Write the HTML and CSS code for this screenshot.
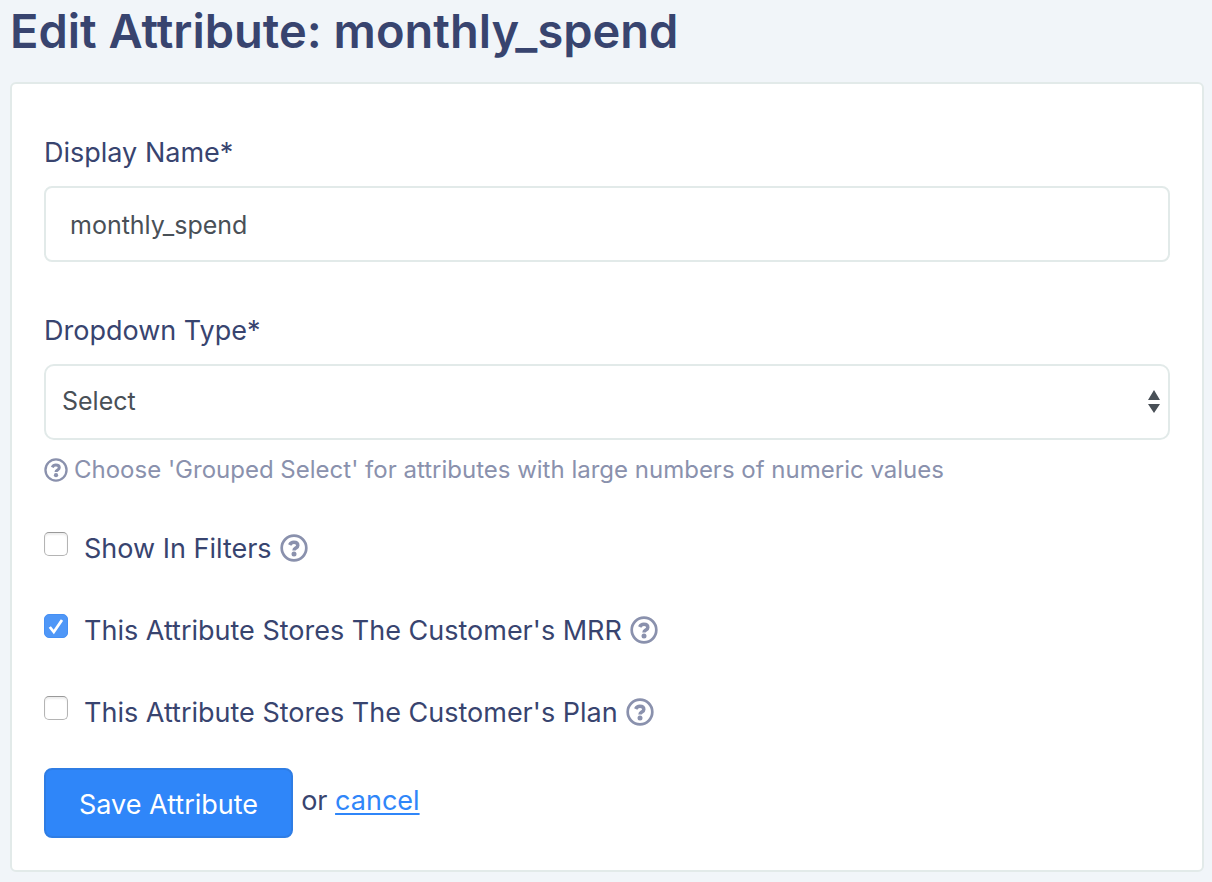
FILE: index.html
```html
<!DOCTYPE html>
<html lang="en">
<head>
<meta charset="utf-8">
<meta name="viewport" content="width=device-width, initial-scale=1">
<title>Edit Attribute: monthly_spend</title>
<link rel="stylesheet" href="styles.css">
</head>
<body>
<svg class="sprite" aria-hidden="true">
  <symbol id="help" viewBox="0 0 28 28">
    <circle cx="14" cy="14" r="12.3" fill="none" stroke="currentColor" stroke-width="2.7"/>
    <path d="M9.7 11C10.5 9.2 11.8 8.3 13.8 8.3c2.4 0 4 1.2 4 3.1 0 2.6-3.8 2.6-3.8 5" fill="none" stroke="currentColor" stroke-width="3.5"/>
    <circle cx="14" cy="20" r="2.5" fill="currentColor"/>
  </symbol>
</svg>
<main class="page">
  <h1 class="title">Edit Attribute: monthly_spend</h1>
  <form class="card">
    <div class="field">
      <label class="label" for="display-name">Display Name*</label>
      <input class="control" id="display-name" type="text" value="monthly_spend">
    </div>
    <div class="field">
      <label class="label" for="dropdown-type">Dropdown Type*</label>
      <div class="select">
        <select class="control control-select" id="dropdown-type">
          <option>Select</option>
          <option>Grouped Select</option>
        </select>
        <svg class="arrows" viewBox="0 0 12 24" aria-hidden="true"><path d="M6 0l6 10H0zM0 14h12L6 23z" fill="currentColor"/></svg>
      </div>
      <p class="hint"><svg class="hint-icon" aria-hidden="true"><use href="#help"/></svg>Choose 'Grouped Select' for attributes with large numbers of numeric values</p>
    </div>
    <div class="checks">
      <div class="check">
        <input class="box" type="checkbox" id="filters">
        <label for="filters">Show In Filters</label>
        <svg class="help-icon" aria-hidden="true"><use href="#help"/></svg>
      </div>
      <div class="check">
        <input class="box" type="checkbox" id="mrr" checked>
        <label for="mrr">This Attribute Stores The Customer's MRR</label>
        <svg class="help-icon" aria-hidden="true"><use href="#help"/></svg>
      </div>
      <div class="check">
        <input class="box" type="checkbox" id="plan">
        <label for="plan">This Attribute Stores The Customer's Plan</label>
        <svg class="help-icon" aria-hidden="true"><use href="#help"/></svg>
      </div>
    </div>
    <div class="actions">
      <button class="save" type="submit">Save Attribute</button>
      <span class="alt">or <a class="cancel" href="#">cancel</a></span>
    </div>
  </form>
</main>
</body>
</html>
```

FILE: styles.css
```css
* {
  box-sizing: border-box;
}

body {
  margin: 0;
  background: #f1f5f9;
  color: #38446f;
  font-family: Inter, "Liberation Sans", sans-serif;
  font-size: 27px;
  line-height: 34px;
}

.sprite {
  position: absolute;
  width: 0;
  height: 0;
}

.page {
  padding: 0 8px 10px 10px;
}

.title {
  margin: 0 0 20px;
  font-size: 47px;
  line-height: 62px;
  font-weight: 600;
}

.card {
  padding: 52px 32px 32px;
  border: 2px solid #e2eae9;
  border-radius: 6px;
  background: #fff;
}

.field {
  margin-bottom: 52px;
}

.label {
  display: block;
  margin-bottom: 16px;
}

.control {
  display: block;
  width: 100%;
  height: 76px;
  padding: 2px 24px 0;
  border: 2px solid #e2eae9;
  border-radius: 8px;
  background: #fff;
  color: #495057;
  font: inherit;
  font-size: 25px;
}

.control-select {
  padding: 0 40px 2px 16px;
  border-radius: 10px;
  appearance: none;
}

.select {
  position: relative;
}

.arrows {
  position: absolute;
  top: 26px;
  right: 10px;
  width: 12px;
  height: 24px;
  color: #495057;
  pointer-events: none;
}

.hint {
  display: flex;
  align-items: center;
  gap: 6px;
  margin: 14px 0 0;
  color: #8a91ad;
  font-size: 24px;
  line-height: 32px;
}

.hint-icon {
  flex: none;
  width: 24px;
  height: 24px;
}

.checks {
  display: flex;
  flex-direction: column;
  gap: 48px;
  margin: -6px 0 40px;
}

.check {
  display: flex;
  align-items: center;
}

.box {
  align-self: flex-start;
  flex: none;
  width: 24px;
  height: 24px;
  margin: 0 16px 0 0;
  border: 1px solid #b4b4b4;
  border-top-color: #999;
  border-radius: 5px;
  background: #fff;
  box-shadow: inset 0 2px 2px #eee;
  appearance: none;
}

.box:checked {
  border-color: #4690f4;
  background: #4f97f7 url("data:image/svg+xml,%3Csvg xmlns='http://www.w3.org/2000/svg' viewBox='0 0 22 22'%3E%3Cpath d='M4.8 12l4 5L17 5' fill='none' stroke='white' stroke-width='2.8'/%3E%3C/svg%3E") center / 22px 22px no-repeat;
  box-shadow: none;
}

.help-icon {
  flex: none;
  width: 28px;
  height: 28px;
  margin: 0 0 2px 8px;
  color: #8a91ad;
}

.actions {
  display: flex;
  align-items: center;
  gap: 8px;
  margin-top: -2px;
}

.save {
  height: 70px;
  padding: 4px 33px 0;
  border: 2px solid #2f7de4;
  border-radius: 8px;
  background: #2f86f9;
  color: #fff;
  font: inherit;
}

.alt {
  padding-bottom: 4px;
}

.cancel {
  color: #2f86f9;
  text-underline-offset: 3px;
  text-decoration-thickness: 2px;
  text-decoration-skip-ink: none;
}
```
